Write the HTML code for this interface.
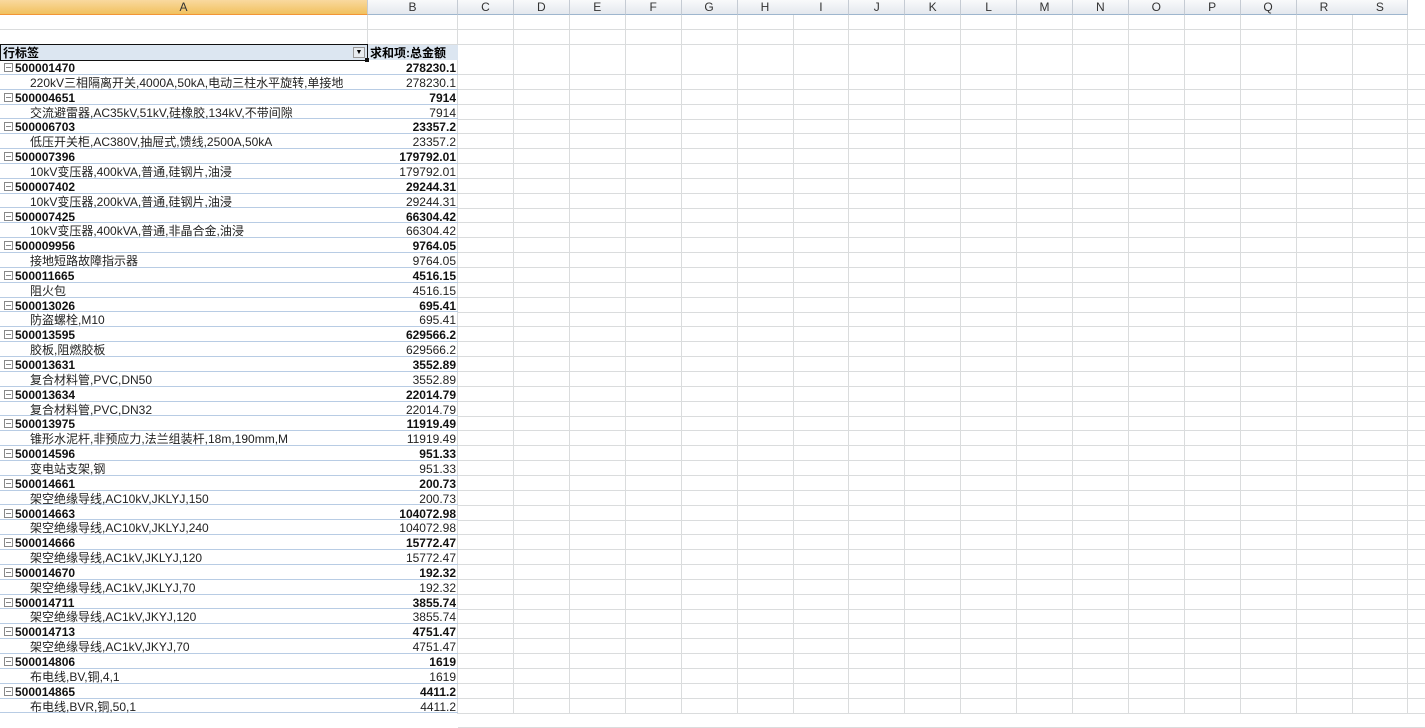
<!DOCTYPE html>
<html><head><meta charset="utf-8"><style>
body{margin:0;width:1425px;height:714px;overflow:hidden;background:#fff;font-family:"Liberation Sans","Noto Sans CJK SC",sans-serif;position:relative}
.hdr{position:absolute;top:0;height:15px;background:linear-gradient(#f9fafb,#e4e8ee);border-right:1px solid #c5cbd3;border-bottom:1px solid #9eb6ce;box-sizing:border-box;font-size:12px;color:#333;text-align:center;line-height:15px}
.hdr.sel{background:linear-gradient(#f9d99f,#f1c15f);border-bottom-color:#f29536}
.vl{position:absolute;top:15px;bottom:0;width:1px;background:#dadcdd}
.hl{position:absolute;left:458px;right:0;height:1px;background:#dadcdd}
.r{position:absolute;left:0;width:458px;height:14.85px;font-size:12px;line-height:16px;border-bottom:1px solid #b8cce4;box-sizing:border-box;color:#111}
.r .a{position:absolute;left:3px;white-space:nowrap}
.r .b{position:absolute;right:2px}
.g{font-weight:bold}
.g .a::before{content:"";display:inline-block;width:7px;height:7px;border:1px solid #888;margin:0 2px 0 1px;vertical-align:0;background:linear-gradient(#888,#888) center/5px 1px no-repeat}
.d{color:#222}
.d .a{left:30px}
</style></head><body>
<div class="hdr sel" style="left:0;width:368px">A</div>
<div class="hdr" style="left:368px;width:90px">B</div>
<div id="cols"></div>
<div class="vl" style="left:367px;top:15px;height:30px"></div>
<div class="vl" style="left:457px"></div>
<div class="hl" style="left:0;top:29px"></div>
<div class="hl" style="left:0;top:44px"></div>
<div style="position:absolute;left:0;top:45px;width:458px;height:15px;background:#dce6f1;font-size:12px;font-weight:bold;line-height:16px">
<div style="position:absolute;left:0;top:-1px;width:366px;height:15px;border:1px solid #111;box-sizing:content-box"></div>
<span style="position:absolute;left:3px">行标签</span>
<div style="position:absolute;left:353px;top:2px;width:12px;height:11px;background:#e8ecf0;border:1px solid #999;box-sizing:border-box;font-size:7px;line-height:10px;text-align:center;font-weight:normal">▼</div>
<span style="position:absolute;left:370px">求和项:总金额</span>
<div style="position:absolute;left:365px;top:13px;width:4px;height:4px;background:#111"></div>
</div>
<div id="rows"></div>
<script>
var L="CDEFGHIJKLMNOPQRS",h="",x=458;
for(var i=0;i<L.length;i++){h+='<div class="hdr" style="left:'+x+'px;width:56px">'+L[i]+'</div><div class="vl" style="left:'+(x+55)+'px"></div>';x+=55.9;}
for(var y=60;y<714;y+=14.85)h+='<div class="hl" style="top:'+Math.round(y+14)+'px"></div>';
document.getElementById('cols').innerHTML=h;
var D=[["500001470","278230.1","220kV三相隔离开关,4000A,50kA,电动三柱水平旋转,单接地"],["500004651","7914","交流避雷器,AC35kV,51kV,硅橡胶,134kV,不带间隙"],["500006703","23357.2","低压开关柜,AC380V,抽屉式,馈线,2500A,50kA"],["500007396","179792.01","10kV变压器,400kVA,普通,硅钢片,油浸"],["500007402","29244.31","10kV变压器,200kVA,普通,硅钢片,油浸"],["500007425","66304.42","10kV变压器,400kVA,普通,非晶合金,油浸"],["500009956","9764.05","接地短路故障指示器"],["500011665","4516.15","阻火包"],["500013026","695.41","防盗螺栓,M10"],["500013595","629566.2","胶板,阻燃胶板"],["500013631","3552.89","复合材料管,PVC,DN50"],["500013634","22014.79","复合材料管,PVC,DN32"],["500013975","11919.49","锥形水泥杆,非预应力,法兰组装杆,18m,190mm,M"],["500014596","951.33","变电站支架,钢"],["500014661","200.73","架空绝缘导线,AC10kV,JKLYJ,150"],["500014663","104072.98","架空绝缘导线,AC10kV,JKLYJ,240"],["500014666","15772.47","架空绝缘导线,AC1kV,JKLYJ,120"],["500014670","192.32","架空绝缘导线,AC1kV,JKLYJ,70"],["500014711","3855.74","架空绝缘导线,AC1kV,JKYJ,120"],["500014713","4751.47","架空绝缘导线,AC1kV,JKYJ,70"],["500014806","1619","布电线,BV,铜,4,1"],["500014865","4411.2","布电线,BVR,铜,50,1"]];
h="";var t=60;
D.forEach(function(d){h+='<div class="r g" style="top:'+t+'px"><span class="a">'+d[0]+'</span><span class="b">'+d[1]+'</span></div>';t+=14.85;
h+='<div class="r d" style="top:'+t+'px"><span class="a">'+d[2]+'</span><span class="b">'+d[1]+'</span></div>';t+=14.85;});
document.getElementById('rows').innerHTML=h;
</script>
</body></html>
